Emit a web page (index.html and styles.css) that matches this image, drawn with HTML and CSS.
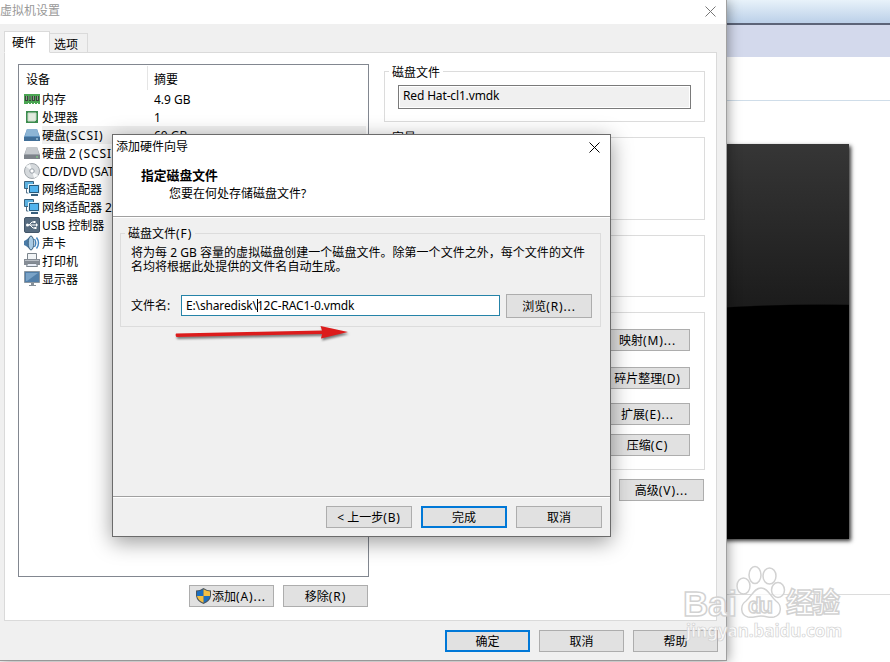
FILE: index.html
```
<!DOCTYPE html>
<html lang="zh-CN">
  <head>
    <meta charset="utf-8">
    <title>虚拟机设置</title>
    <link rel="stylesheet" href="styles.css">
  </head>
  <body>
    <div class="desktop">
      <div class="host">
        <div class="host-bar"></div>
        <div class="host-tabs"></div>
        <div class="host-line"></div>
        <div class="vm-screen"></div>
        <div class="host-line bottom"></div>
      </div>

      <div class="settings">
        <div class="titlebar">
          <span>虚拟机设置</span>
          <svg class="close" width="11" height="11" viewBox="0 0 11 11"><path d="M.5.5l10 10M10.5.5l-10 10" /></svg>
        </div>
        <div class="tabs">
          <div class="tab active">硬件</div>
          <div class="tab">选项</div>
        </div>
        <div class="page">
          <div class="left">
            <div class="list">
              <div class="list-head"><span class="device">设备</span><span class="summary">摘要</span></div>
              <div class="row">
                <svg class="icon" viewBox="0 0 16 16"><path d="M0 3h16v10h-2v-1h-1v1h-2v-1h-1v1H8v-1H7v1H5v-1H4v1H0z" fill="#4aa552" /><path d="M1 5h3v5H1zM5 5h2v5H5zM8 5h3v5H8zM12 5h3v5h-3z" fill="#3a463c" /><path d="M2.500 5v4M6 5v4M9.500 5v4M13.500 5v4" stroke="#8b998c" /></svg>
                <span class="name">内存</span><span>4.9 GB</span>
              </div>
              <div class="row">
                <svg class="icon" viewBox="0 0 16 16"><path d="M2 2h12v12H2z" fill="#3c8c4e" /><path d="M4 4h8v7l-1 1H4z" fill="#e3eadf" stroke="#c6d8c6" /></svg>
                <span class="name">处理器</span><span>1</span>
              </div>
              <div class="row selected">
                <svg class="icon" viewBox="0 0 16 16"><path d="M3 2h10l3 8v4H0v-4z" fill="#5e91bd" /><path d="M3 2h10l2 7H1z" fill="#8db5d5" /><path d="M0 10h16v4H0z" fill="#416f98" /><path d="M12 12h2" stroke="#c8e8f5" /></svg>
                <span class="name">硬盘<span class="key">(SCSI)</span></span><span>60 GB</span>
              </div>
              <div class="row">
                <svg class="icon" viewBox="0 0 16 16"><path d="M3 2h10l3 8v4H0v-4z" fill="#999fa6" /><path d="M3 2h10l2 7H1z" fill="#c6cace" /><path d="M0 10h16v4H0z" fill="#7d838a" /><path d="M12 12h2" stroke="#82e086" /></svg>
                <span class="name">硬盘 2 <span class="key">(SCSI</span></span>
              </div>
              <div class="row">
                <svg class="icon" viewBox="0 0 16 16"><circle cx="8" cy="8" r="7.500" fill="#d5d9dc" stroke="#9fa5aa" /><path d="M8 8L2 3.500A8 8 0 0 1 6 1zM8 8l6 4.500A8 8 0 0 1 10 15z" fill="#f6f8f9" /><circle cx="8" cy="8" r="2.200" fill="#fff" stroke="#949ca4" /></svg>
                <span class="name">CD/DVD (SAT</span>
              </div>
              <div class="row">
                <svg class="icon" viewBox="0 0 16 16"><path d="M.5.5h9v7h-9z" fill="#5db2e0" stroke="#39627f" /><path d="M2.500 8v4h3" fill="none" stroke="#54728a" /><path d="M4.500 3.500h11v9h-11z" fill="#3da0dd" stroke="#e5f2f9" /><path d="M5.500 4.500h9v7h-9z" fill="#52b4ee" stroke="#285979" /><path d="M7 14h7" stroke="#385f7c" stroke-width="2" /></svg>
                <span class="name">网络适配器</span>
              </div>
              <div class="row">
                <svg class="icon" viewBox="0 0 16 16"><path d="M.5.5h9v7h-9z" fill="#5db2e0" stroke="#39627f" /><path d="M2.500 8v4h3" fill="none" stroke="#54728a" /><path d="M4.500 3.500h11v9h-11z" fill="#3da0dd" stroke="#e5f2f9" /><path d="M5.500 4.500h9v7h-9z" fill="#52b4ee" stroke="#285979" /><path d="M7 14h7" stroke="#385f7c" stroke-width="2" /></svg>
                <span class="name">网络适配器 2</span>
              </div>
              <div class="row">
                <svg class="icon" viewBox="0 0 16 16"><rect x=".5" y=".5" width="15" height="15" rx="1.500" fill="#566b7f" stroke="#435669" /><path d="M3 8h10M5 8l3-3h2M6 8l3 3h2" fill="none" stroke="#fff" /><circle cx="3.500" cy="8" r="1.500" fill="#fff" /><path d="M12 6l2 2-2 2zM9.500 4h2v2h-2zM10.500 10h2v2h-2z" fill="#fff" /></svg>
                <span class="name">USB 控制器</span>
              </div>
              <div class="row">
                <svg class="icon" viewBox="0 0 16 16"><path d="M0 6l2-1 5-4v14l-5-4-2-1z" fill="#4a7ba7" /><ellipse cx="7" cy="8" rx="2.800" ry="7" fill="#a9cbe5" stroke="#41647f" /><path d="M10.500 4q2.500 4 0 8M12.500 2.500q4 5.500 0 11" fill="none" stroke="#4284be" stroke-width="1.400" /></svg>
                <span class="name">声卡</span>
              </div>
              <div class="row">
                <svg class="icon" viewBox="0 0 16 16"><path d="M3.500 .5h9v6h-9z" fill="#f1f4f6" stroke="#7c858d" /><path d="M0 6h16v6H0z" fill="#858c95" /><path d="M1 7h14v1H1z" fill="#b9bfc6" /><path d="M3.500 10.500h9l1 3h-11z" fill="#e8edf7" stroke="#7c858d" /></svg>
                <span class="name">打印机</span>
              </div>
              <div class="row">
                <svg class="icon" viewBox="0 0 16 16"><path d="M.5.500h15v11H.5z" fill="#527fa9" stroke="#8b97a1" /><path d="M2 2h12L3 10H2z" fill="#7aa3c7" /><path d="M7 12h3v2h2v1H5v-1h2z" fill="#858f98" /></svg>
                <span class="name">显示器</span>
              </div>
            </div>
            <div class="list-buttons">
              <button class="button">
                <svg class="shield" viewBox="0 0 15 16"><path d="M7.500 0Q11 2.500 15 2.500V8q-1 5.500-7.500 8Q1 13.500 0 8V2.500Q4 2.500 7.500 0z" fill="#4b565f" /><path d="M7.500 1.300V8H1V3.500q3.500-.2 6.500-2.200zM7.500 8H14q-1 4.500-6.500 6.800z" fill="#1c6fc0" /><path d="M7.500 1.300V8H14V3.500q-3.500-.2-6.500-2.200zM7.500 8H1q1 4.500 6.500 6.800z" fill="#f3bf43" /></svg>添加<span class="key">(A)...</span>
              </button>
              <button class="button">移除<span class="key">(R)</span></button>
            </div>
          </div>
          <div class="right">
            <div class="group file"><span class="legend">磁盘文件</span><div class="readonly">Red Hat-cl1.vmdk</div></div>
            <div class="group capacity"><span class="legend">容量</span></div>
            <div class="group info"></div>
            <div class="group tools">
              <button class="button">映射<span class="key">(M)...</span></button>
              <button class="button">碎片整理<span class="key">(D)</span></button>
              <button class="button">扩展<span class="key">(E)...</span></button>
              <button class="button">压缩<span class="key">(C)</span></button>
            </div>
            <button class="button advanced">高级<span class="key">(V)...</span></button>
          </div>
        </div>
        <div class="footer">
          <button class="button default">确定</button>
          <button class="button">取消</button>
          <button class="button">帮助</button>
        </div>
      </div>

      <div class="wizard">
        <div class="wizard-head">
          <div class="wizard-title">
            <span>添加硬件向导</span>
            <svg class="close" width="11" height="11" viewBox="0 0 11 11"><path d="M.5.5l10 10M10.5.5l-10 10" /></svg>
          </div>
          <div class="heading">指定磁盘文件</div>
          <div class="question">您要在何处存储磁盘文件?</div>
        </div>
        <div class="wizard-body">
          <div class="group disk">
            <span class="legend">磁盘文件<span class="key">(F)</span></span>
            <div class="hint">将为每 2 GB 容量的虚拟磁盘创建一个磁盘文件。除第一个文件之外，每个文件的文件<br>名均将根据此处提供的文件名自动生成。</div>
            <div class="field">
              <span class="label">文件名:</span>
              <div class="input">E:\sharedisk\<span class="caret"></span>12C-RAC1-0.vmdk</div>
              <button class="button">浏览<span class="key">(R)...</span></button>
            </div>
          </div>
        </div>
        <div class="wizard-footer">
          <button class="button">&lt; 上一步<span class="key">(B)</span></button>
          <button class="button default">完成</button>
          <button class="button">取消</button>
        </div>
      </div>

      <svg class="arrow" width="180" height="24" viewBox="0 0 180 24">
        <path d="M4 10.500Q3 12.500 4.500 14L150 11l-1 4.500L176 9 148.500 3l1.500 4.500z" />
      </svg>

      <svg class="watermark" width="170" height="84" viewBox="0 0 170 84">
        <ellipse cx="60.500" cy="26" rx="6.500" ry="8" />
        <ellipse cx="72" cy="15" rx="6" ry="8.500" />
        <ellipse cx="86.500" cy="16" rx="6.500" ry="8" />
        <ellipse cx="95" cy="30" rx="6.500" ry="7.500" />
        <path d="M78 28c-7 0-9 8-15 13-6 4-6 14 2 16 5 1 8-1 13-1s8 2 13 1c8-2 8-12 2-16-6-5-8-13-15-13z" />
        <text class="brand" x="0" y="56" textLength="54">Bai</text>
        <text class="du" x="65" y="53" textLength="25">du</text>
        <text class="brand cn" x="103" y="53" textLength="54">经验</text>
        <text class="url" x="3" y="77" textLength="156">jingyan.baidu.com</text>
      </svg>
    </div>
  </body>
</html>
```
FILE: styles.css
```
* {
  box-sizing: border-box;
}
body {
  margin: 0;
  font-family: "Noto Sans", "Noto Sans CJK SC", sans-serif;
  font-size: 12px;
  line-height: 16px;
  color: #000;
}
.desktop {
  position: relative;
  width: 890px;
  height: 662px;
  overflow: hidden;
  background: #fff;
}

/* window behind the settings dialog */
.host-bar {
  height: 25px;
  background: linear-gradient(#e8f2fa, #bdd1e9 22px);
  border-bottom: 2px solid #5c6478;
}
.host-tabs {
  height: 32px;
  background: #d3d9ec;
}
.host-line {
  height: 44px;
  border-bottom: 1px solid #cfdde9;
}
.host-line.bottom {
  height: 56px;
  border-color: #dcdcdc;
}
.vm-screen {
  width: 849px;
  height: 395px;
  margin-top: 43px;
  background: radial-gradient(ellipse 620px 240px at 820px 400px, #000 99.5%, transparent 100%), linear-gradient(#363636, #1c1c1c 160px);
  box-shadow: 2px 2px 4px rgba(0, 0, 0, 0.8);
}

.settings {
  position: absolute;
  left: 0;
  top: 0;
  width: 727px;
  height: 661px;
  background: #f0f0f0;
  border-right: 1px solid #a0a0a0;
  border-bottom: 1px solid #989898;
  box-shadow: 1px 1px 12px rgba(0, 0, 0, 0.4);
}
.titlebar {
  display: flex;
  justify-content: space-between;
  height: 24px;
  padding: 3px 10px 0 0;
  background: #fff;
  color: #999;
}
.close {
  margin-top: 3px;
  stroke: #777;
  stroke-width: 1;
}
.tabs {
  display: flex;
  align-items: flex-end;
  height: 22px;
  margin: 7px 0 0 4px;
}
.tab {
  width: 38px;
  height: 20px;
  padding: 3px 0 0 4px;
  border: 1px solid #dadada;
  border-left: none;
}
.tab.active {
  width: 46px;
  height: 22px;
  padding: 3px 0 0 7px;
  border-left: 1px solid #dadada;
  border-bottom-color: #fff;
  background: #fff;
  z-index: 1;
}
.page {
  display: flex;
  width: 713px;
  height: 569px;
  margin: -1px 0 0 4px;
  padding: 11px 0 0 13px;
  border: 1px solid #dadada;
  background: #fff;
}
.left {
  width: 351px;
}
.list {
  height: 513px;
  padding: 1px 2px 0 5px;
  border: 1px solid #828790;
}
.list-head {
  display: flex;
  height: 24px;
  line-height: 28px;
}
.device {
  width: 124px;
  padding-left: 2px;
  border-right: 1px solid #e5e5e5;
}
.summary {
  padding-left: 6px;
}
.row {
  display: flex;
  height: 18px;
  line-height: 20px;
  white-space: nowrap;
}
.icon {
  flex: none;
  width: 16px;
  height: 16px;
  margin: 1px 2px 0 0;
}
.name {
  width: 112px;
}
.key {
  letter-spacing: 0.9px;
}
.selected {
  background: linear-gradient(90deg, transparent 18px, #f0f0f0 18px);
}
.list-buttons {
  display: flex;
  justify-content: flex-end;
  gap: 9px;
  padding: 8px 1px 0 0;
}
.button {
  display: flex;
  align-items: center;
  justify-content: center;
  width: 85px;
  height: 22px;
  padding: 2px 0 0;
  border: 1px solid #adadad;
  background: #e1e1e1;
  color: #000;
  font: inherit;
  white-space: nowrap;
}
.button.default {
  border: 2px solid #0078d7;
}
.shield {
  width: 15px;
  height: 16px;
  margin: -2px 1px 0 -1px;
}
.right {
  width: 321px;
  margin: 7px 0 0 15px;
}
.group {
  border: 1px solid #dcdcdc;
}
.legend {
  display: block;
  width: max-content;
  margin: -8px 0 0 4px;
  padding: 0 3px;
  background: #fff;
}
.file {
  height: 51px;
}
.file .legend {
  position: relative;
  top: 1px;
}
.readonly {
  width: 293px;
  height: 24px;
  margin: 5px 0 0 13px;
  padding: 2px 4px;
  border: 1px solid #7a7a7a;
  background: #f0f0f0;
  box-shadow: inset 0 0 0 1px #fff;
  letter-spacing: -0.15px;
}
.capacity {
  height: 83px;
  margin-top: 15px;
}
.info {
  height: 62px;
  margin-top: 15px;
}
.tools {
  display: flex;
  flex-direction: column;
  align-items: flex-end;
  height: 158px;
  margin-top: 15px;
  padding: 16px 14px 0 0;
}
.tools .button:nth-child(2) {
  margin-top: 16px;
}
.tools .button:nth-child(3) {
  margin-top: 14px;
}
.tools .button:nth-child(4) {
  margin-top: 9px;
}
.advanced {
  margin: 9px 0 0 235px;
}
.footer {
  display: flex;
  justify-content: flex-end;
  gap: 9px;
  padding: 9px 8px 0 0;
}

.wizard {
  position: absolute;
  left: 112px;
  top: 134px;
  display: flex;
  flex-direction: column;
  width: 499px;
  height: 403px;
  border: 1px solid #6b6b6b;
  background: #f0f0f0;
  box-shadow: 0 5px 20px rgba(0, 0, 0, 0.4);
}
.wizard-head {
  height: 82px;
  border-bottom: 1px solid #a0a0a0;
  background: #fff;
}
.wizard-title {
  display: flex;
  justify-content: space-between;
  height: 32px;
  padding: 4px 10px 0 3px;
}
.wizard .close {
  stroke: #000;
}
.heading {
  padding-left: 28px;
  font-weight: bold;
  font-size: 12.8px;
}
.question {
  padding: 3px 0 0 56px;
}
.wizard-body {
  height: 279px;
  padding: 15px 8px 0 7px;
  border-top: 1px solid #fff;
}
.disk {
  width: 481px;
  height: 94px;
}
.disk .legend {
  background: #f0f0f0;
}
.hint {
  margin: 4px 0 0 10px;
  line-height: 14px;
  letter-spacing: 0.03px;
  white-space: nowrap;
}
.field {
  display: flex;
  align-items: center;
  margin: 20px 0 0 10px;
}
.label {
  width: 50px;
}
.input {
  width: 319px;
  height: 21px;
  margin: -1px 6px 0 0;
  padding: 2px 4px;
  border: 1px solid #2583a8;
  background: #fff;
  letter-spacing: -0.15px;
}
.caret {
  display: inline-block;
  width: 1px;
  height: 13px;
  margin-right: -1px;
  background: #000;
  vertical-align: -2px;
}
.wizard .button {
  width: 86px;
}
.field .button {
  height: 24px;
}
.wizard-footer {
  display: flex;
  justify-content: flex-end;
  gap: 9px;
  height: 40px;
  padding: 9px 8px 0 0;
  border-top: 1px solid #a0a0a0;
  box-shadow: inset 0 1px #fff;
}

.arrow {
  position: absolute;
  left: 172px;
  top: 323px;
  fill: #dc1c1c;
  filter: drop-shadow(1px 2px 1px rgba(0, 0, 0, 0.5));
}
.watermark {
  position: absolute;
  left: 683px;
  top: 560px;
  fill: rgba(255, 255, 255, 0.75);
  stroke: #d2d2d2;
  stroke-width: 1.5;
}
.brand {
  font: bold 35px "Liberation Sans", sans-serif;
}
.brand.cn {
  font: bold 28px "Noto Sans CJK SC", sans-serif;
}
.du {
  font: bold 22px "Liberation Sans", sans-serif;
}
.url {
  font: bold 17px "Noto Sans", sans-serif;
  stroke-width: 0.7;
}
```
